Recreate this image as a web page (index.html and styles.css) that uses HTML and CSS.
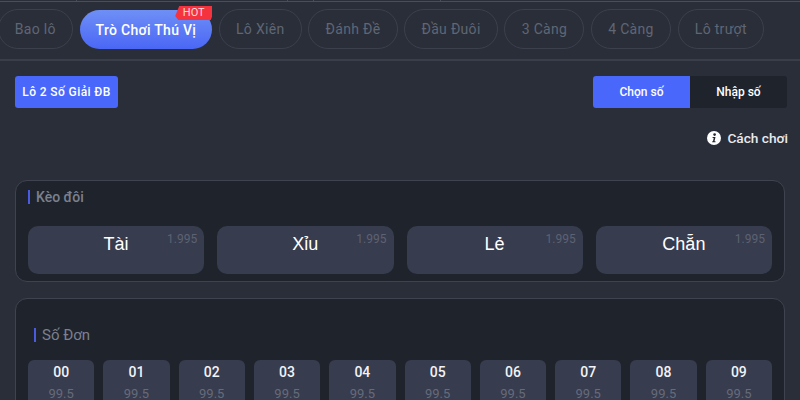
FILE: index.html
```html
<!DOCTYPE html>
<html lang="vi">
<head>
<meta charset="utf-8">
<title>Trò Chơi Thú Vị</title>
<link rel="stylesheet" href="styles.css">
</head>
<body>
<main class="page">
  <div class="topline"></div>
  <nav class="tabs">
    <a class="tab">Bao lô</a>
    <a class="tab active">Trò Chơi Thú Vị<span class="hot">HOT</span></a>
    <a class="tab">Lô Xiên</a>
    <a class="tab">Đánh Đề</a>
    <a class="tab">Đầu Đuôi</a>
    <a class="tab">3 Càng</a>
    <a class="tab">4 Càng</a>
    <a class="tab">Lô trượt</a>
  </nav>
  <div class="toolbar">
    <button class="pill">Lô 2 Số Giải ĐB</button>
    <div class="segment">
      <button class="seg on">Chọn số</button>
      <button class="seg">Nhập số</button>
    </div>
  </div>
  <div class="howto">
    <svg class="info" viewBox="0 0 14 14" aria-hidden="true"><circle cx="7" cy="7" r="7" fill="#fff"/><circle cx="7.6" cy="3.6" r="1.3" fill="#23272f"/><path d="M5.6 5.9h2.9l-1 4.3h1v1H5.2v-1h.8l.7-3.3H5.6z" fill="#23272f"/></svg>
    <span>Cách chơi</span>
  </div>
  <section class="card first">
    <h2 class="title">Kèo đôi</h2>
    <div class="odds">
      <div class="odd"><b>Tài</b><i>1.995</i></div>
      <div class="odd"><b>Xỉu</b><i>1.995</i></div>
      <div class="odd"><b>Lẻ</b><i>1.995</i></div>
      <div class="odd"><b>Chẵn</b><i>1.995</i></div>
    </div>
  </section>
  <section class="card second">
    <h2 class="title">Số Đơn</h2>
    <div class="nums">
      <div class="num"><b>00</b><i>99.5</i></div>
      <div class="num"><b>01</b><i>99.5</i></div>
      <div class="num"><b>02</b><i>99.5</i></div>
      <div class="num"><b>03</b><i>99.5</i></div>
      <div class="num"><b>04</b><i>99.5</i></div>
      <div class="num"><b>05</b><i>99.5</i></div>
      <div class="num"><b>06</b><i>99.5</i></div>
      <div class="num"><b>07</b><i>99.5</i></div>
      <div class="num"><b>08</b><i>99.5</i></div>
      <div class="num"><b>09</b><i>99.5</i></div>
    </div>
  </section>
</main>
</body>
</html>
```
FILE: styles.css
```css
* { box-sizing: border-box; }
html, body { margin: 0; height: 400px; overflow: hidden; }
body { background: #2a2e39; font-family: Roboto, "Liberation Sans", sans-serif; color: #fff; }
.page { width: 800px; height: 400px; overflow: hidden; }
.topline {
  height: 2px;
  border-bottom: 1px solid #4a4e5c;
  background:
    linear-gradient(#4a4e5c, #4a4e5c) 76px 0 / 1px 1px no-repeat,
    linear-gradient(#4a4e5c, #4a4e5c) 287px 0 / 1px 1px no-repeat,
    linear-gradient(#4a4e5c, #4a4e5c) 313px 0 / 1px 1px no-repeat,
    linear-gradient(#4a4e5c, #4a4e5c) 440px 0 / 1px 1px no-repeat;
}
.tabs { display: flex; gap: 6.5px; height: 59px; padding-top: 7px; margin-left: -2.5px; border-bottom: 2px solid #3a3e4a; }
.tab { position: relative; height: 40px; padding: 0 16.3px; display: flex; align-items: center; border: 1px solid #3c404c; border-radius: 20px; font-size: 14px; letter-spacing: .3px; color: #5f6674; white-space: nowrap; }
.tab.active { height: 39px; margin-top: 1px; padding: 0 16px; border: 0; color: #fff; font-weight: 500; background: linear-gradient(180deg, #6f8ff5, #4a67f5); }
.hot { position: absolute; top: -4px; right: 0; width: 37px; height: 14px; background: #f5333f; clip-path: polygon(4px 0, 100% 0, 100% 10px, 35.5px 100%, 3px 100%, 0 10px); font-size: 11px; font-weight: 400; line-height: 14px; text-align: center; color: #ffd9dc; letter-spacing: 0; }
.toolbar { display: flex; justify-content: space-between; padding: 15px 13px 0 15px; }
button { border: 0; font: 500 12px Roboto, "Liberation Sans", sans-serif; color: #fff; height: 32px; }
.pill { width: 103px; padding: 0; background: #4a67fb; border-radius: 3px; letter-spacing: .4px; }
.segment { display: flex; border-radius: 3px; overflow: hidden; }
.seg { width: 97px; background: #1f232c; }
.seg.on { background: #4a67fb; }
.howto { display: flex; align-items: center; justify-content: flex-end; gap: 6px; padding-right: 12px; margin-top: 20px; height: 20px; font-size: 13.7px; font-weight: 500; color: #e8eaee; }
.info { width: 14px; height: 14px; }
.card { margin: 0 15px; background: #1f242c; border: 1px solid #3f4350; border-radius: 12px; padding: 0 12px; }
.first { margin-top: 32px; height: 102px; padding-top: 8px; }
.second { margin-top: 16px; height: 130px; padding-top: 27px; }
.title { margin: 0; height: 16px; display: flex; align-items: center; gap: 6px; font-size: 14px; font-weight: 500; color: #7b8090; }
.title::before { content: ""; width: 2px; height: 14px; background: #4a5be0; }
.second .title { padding-left: 6px; height: 18px; font-size: 15px; font-weight: 400; }
.odds { display: grid; grid-template-columns: repeat(4, 1fr); gap: 13px; margin-top: 21px; }
.odd { position: relative; height: 48px; padding-top: 7px; background: #373c4e; border-radius: 10px; text-align: center; }
.odd b { font-family: "Liberation Sans", Arial, sans-serif; font-size: 18px; font-weight: 400; line-height: 22px; }
.odd i { position: absolute; top: 6px; right: 7px; font-size: 12px; font-style: normal; color: #5d6272; }
.nums { display: grid; grid-template-columns: repeat(10, 1fr); gap: 9px; margin-top: 16px; }
.num { height: 60px; padding-top: 4px; background: #373c4e; border-radius: 6px; text-align: center; }
.num b { display: block; font-size: 14px; font-weight: 500; line-height: 16px; color: #f2f3f6; }
.num i { display: block; margin-top: 6px; font-size: 13px; font-style: normal; line-height: 16px; color: #666b7b; }
```
